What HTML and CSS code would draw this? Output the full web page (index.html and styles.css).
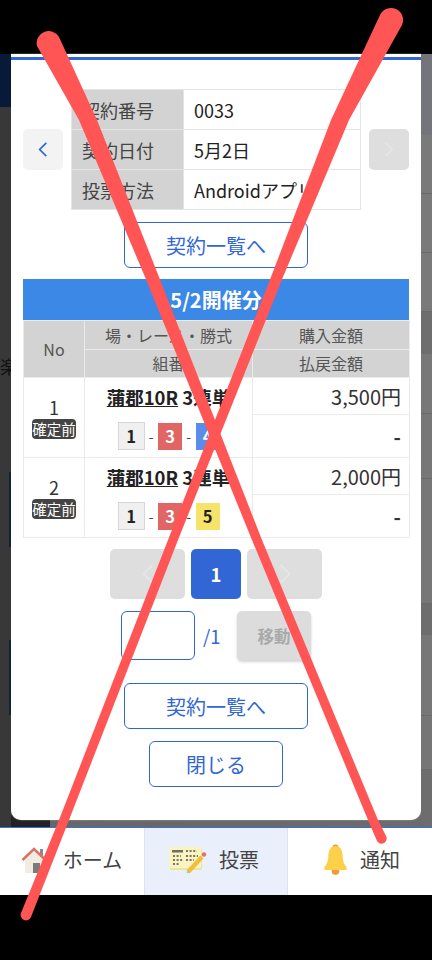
FILE: index.html
```html
<!DOCTYPE html>
<html lang="ja">
<head>
<meta charset="utf-8">
<title>契約詳細</title>
<link rel="stylesheet" href="styles.css">
</head>
<body>
<div class="screen">
  <div class="black-top"></div>
  <main class="main">
    <div class="strip-left">
      <div class="strip-navy"></div>
      <div class="strip-text">楽</div>
      <div class="strip-edge strip-edge-a"></div>
      <div class="strip-edge strip-edge-b"></div>
    </div>
    <section class="modal">
      <div class="modal-bar"></div>
      <div class="info-row">
        <button class="side-btn side-on" aria-label="前へ">
          <svg viewBox="0 0 12 20" class="chev"><path d="M10 2 L2 10 L10 18" class="chev-blue"/></svg>
        </button>
        <table class="info">
          <tr><th>契約番号</th><td>0033</td></tr>
          <tr><th>契約日付</th><td>5月2日</td></tr>
          <tr><th>投票方法</th><td>Androidアプリ</td></tr>
        </table>
        <button class="side-btn side-off" aria-label="次へ">
          <svg viewBox="0 0 12 20" class="chev"><path d="M2 2 L10 10 L2 18" class="chev-gray"/></svg>
        </button>
      </div>
      <div class="center-row list-top"><a class="outline wide">契約一覧へ</a></div>
      <div class="card-title">5/2開催分</div>
      <table class="bets">
        <tr class="hd">
          <th rowspan="2" class="c-no">No</th>
          <th class="c-race">場・レース・勝式</th>
          <th class="c-amt">購入金額</th>
        </tr>
        <tr class="hd">
          <th>組番</th>
          <th>払戻金額</th>
        </tr>
        <tr class="amt-a">
          <td rowspan="2" class="no"><div>1</div><span class="badge">確定前</span></td>
          <td rowspan="2" class="bet">
            <div class="bet-title"><u>蒲郡10R</u> 3連単</div>
            <div class="chips"><span class="chip c1">1</span><i>-</i><span class="chip c3">3</span><i>-</i><span class="chip c4">4</span></div>
          </td>
          <td class="amt">3,500円</td>
        </tr>
        <tr class="amt-b"><td class="amt dash">-</td></tr>
        <tr class="amt-a">
          <td rowspan="2" class="no"><div>2</div><span class="badge">確定前</span></td>
          <td rowspan="2" class="bet">
            <div class="bet-title"><u>蒲郡10R</u> 3連単</div>
            <div class="chips"><span class="chip c1">1</span><i>-</i><span class="chip c3">3</span><i>-</i><span class="chip c5">5</span></div>
          </td>
          <td class="amt">2,000円</td>
        </tr>
        <tr class="amt-b"><td class="amt dash">-</td></tr>
      </table>
      <div class="pager">
        <span class="pg pg-off"><svg viewBox="0 0 12 20" class="chev chev-lg"><path d="M10 2 L2 10 L10 18" class="chev-gray"/></svg></span>
        <span class="pg pg-on">1</span>
        <span class="pg pg-off"><svg viewBox="0 0 12 20" class="chev chev-lg"><path d="M2 2 L10 10 L2 18" class="chev-gray"/></svg></span>
      </div>
      <div class="jump">
        <input class="jump-input" type="text" aria-label="ページ">
        <span class="jump-total">/1</span>
        <span class="jump-btn">移動</span>
      </div>
      <div class="center-row list-bottom"><a class="outline wide">契約一覧へ</a></div>
      <div class="center-row close-row"><a class="outline narrow">閉じる</a></div>
    </section>
    <div class="strip-right">
      <div class="band b1"></div><div class="band b2"></div><div class="band b2"></div><div class="band b2"></div>
      <div class="band b3"></div><div class="band b4"></div><div class="band b5"></div><div class="band b6"></div>
      <div class="band b3b"></div><div class="band b7"></div><div class="band b8"></div><div class="band b9"></div>
    </div>
  </main>
  <nav class="nav">
    <a class="nav-item">
      <svg class="ico-home" viewBox="0 0 26 28">
        <rect x="19" y="3" width="3" height="8" fill="#8a8a8a"/>
        <path d="M4 13 L13 5 L22 13 V27 H4 Z" fill="#f1ece2"/>
        <rect x="12" y="17" width="7" height="10" fill="#7b7b7b"/>
        <path d="M1.500 14 L13 3 L24.500 14" fill="none" stroke="#da7566" stroke-width="2.6"/>
      </svg>
      <span>ホーム</span>
    </a>
    <a class="nav-item nav-active">
      <svg class="ico-ticket" viewBox="0 0 38 28">
        <rect x="1" y="3" width="32" height="21" rx="1" fill="#efe3a4"/>
        <rect x="0" y="1" width="32" height="21" rx="1" fill="#fbf3c0"/>
        <rect x="3" y="4" width="11" height="2.500" fill="#6f6f6a"/>
        <path d="M4 10h8M4 14h10M4 18h6M17 5h11M17 10h12M17 14h8" stroke="#77746a" stroke-width="2" stroke-dasharray="2 1.600" fill="none"/>
        <path d="M19 26 L33 11" stroke="#f0bd3c" stroke-width="4.500" fill="none"/>
        <path d="M17.500 27.500 L19 24 L21 26 Z" fill="#c9b98a"/>
        <circle cx="35" cy="8.500" r="2.200" fill="#e8705f"/>
      </svg>
      <span>投票</span>
    </a>
    <a class="nav-item">
      <svg class="ico-bell" viewBox="0 0 26 32">
        <circle cx="13" cy="3.500" r="3.200" fill="#ee9b3c"/>
        <circle cx="13" cy="28" r="4" fill="#ee9b3c"/>
        <path d="M13 2 C7 2 5.500 8 5.500 13 C5.500 19 3 22 1.500 24 Q1 27 3 27 H23 Q25 27 24.500 24 C23 22 20.500 19 20.500 13 C20.500 8 19 2 13 2 Z" fill="#fdd04b"/>
      </svg>
      <span>通知</span>
    </a>
  </nav>
  <div class="black-bottom"></div>
  <svg class="cross" viewBox="0 0 432 960" aria-hidden="true">
    <path d="M37 46 A12 12 0 0 1 59 37 L97 120 L159 277 L262 540 L378 820 L386 836 A5 5 0 0 1 377 841 L368 820 L252 540 L145 277 L79 120 Z"/>
    <path d="M380 15 A12 12 0 0 1 402 25 L349 120 L283 277 L178 540 L69 820 L31 917 A5 5 0 0 1 21 913 L59 820 L168 540 L271 277 L331 120 Z"/>
  </svg>
</div>
</body>
</html>
```
FILE: styles.css
```css
* { box-sizing: border-box; }
html, body { margin: 0; padding: 0; background: #000; }
body { font-family: "Noto Sans CJK JP", "Noto Sans", sans-serif; color: #222; }
.screen { position: relative; width: 432px; height: 960px; display: flex; flex-direction: column; overflow: hidden; }
.black-top { height: 54px; background: #000; }
.black-bottom { height: 65px; background: #000; }

.main { height: 773px; display: flex; background: linear-gradient(to right, #222 50px, #676767 50px, #6c6c6c); }
.strip-left { position: relative; width: 11px; background: #383838; overflow: hidden; }
.strip-navy { height: 53px; background: #071a38; }
.strip-text { margin-top: 247px; width: 11px; display: flex; justify-content: flex-end; font-size: 18px; line-height: 24px; color: #111; white-space: nowrap; direction: rtl; }
.strip-edge { position: absolute; right: 0; width: 2px; background: #14213a; }
.strip-edge-a { top: 418px; height: 75px; }
.strip-edge-b { top: 586px; height: 75px; }

.modal { width: 410px; height: 766px; background: #fff; border-radius: 0 0 10px 10px; box-shadow: 0 0 1.500px #bbb; }
.modal-bar { height: 3px; margin-top: 3px; background: #3266d5; }

.strip-right { width: 11px; display: flex; flex-direction: column; }
.band { border-bottom: 1px solid #6a6a6a; }
.b1 { height: 81px; background: #73757a; border: 0; }
.b2 { height: 59px; background: #7a7a7a; }
.b3 { height: 42px; background: #6e6e6e; border: 0; }
.b4 { height: 60px; background: #787878; }
.b5 { height: 65px; background: #777; }
.b6 { height: 125px; background: #777; }
.b3b { height: 31px; background: #6d6d6d; border: 0; }
.b7 { height: 81px; background: #777; }
.b8 { height: 54px; background: #767676; }
.b9 { height: 56px; background: #6d6d6d; border: 0; }

.info-row { display: flex; align-items: center; justify-content: space-between; margin-top: 29px; padding: 0 12px; }
.side-btn { width: 40px; height: 41px; border: 0; border-radius: 5px; padding: 0; display: flex; align-items: center; justify-content: center; }
.side-on { background: #f3f3f3; }
.side-off { background: #dedede; }
.chev { width: 10px; height: 17px; }
.chev-lg { width: 14px; height: 22px; }
.chev-blue, .chev-gray { fill: none; stroke-width: 1.600; }
.chev-blue { stroke: #3266d5; stroke-width: 2; }
.chev-gray { stroke: #e6e6e6; }

.info { width: 290px; height: 121px; table-layout: fixed; border-collapse: collapse; font-size: 18px; }
.info th, .info td { border: 1px solid #e4e4e4; padding: 0; height: 40px; font-weight: 400; }
.info th { width: 112px; padding-left: 10px; background: #d3d3d3; color: #444; text-align: left; }
.info td { padding-left: 10px; background: #fff; color: #222; text-align: left; white-space: nowrap; overflow: hidden; }

.center-row { display: flex; justify-content: center; }
.list-top { margin-top: 12px; }
.list-bottom { margin-top: 23px; }
.close-row { margin-top: 12px; }
.outline { display: flex; align-items: center; justify-content: center; height: 46px; border: 1.500px solid #3266d5; border-radius: 6px; color: #3266d5; font-size: 20px; background: #fff; }
.wide { width: 184px; }
.narrow { width: 134px; }

.card-title { margin: 11px 12px 0; height: 41px; display: flex; align-items: center; justify-content: center; background: #3b88e6; color: #fff; font-weight: 700; font-size: 20px; }
.bets { width: 386px; margin-left: 12px; table-layout: fixed; border-collapse: collapse; }
.bets th, .bets td { border: 1.500px solid #ebebeb; padding: 0; }
.bets th { background: #d3d3d3; color: #555; font-size: 16px; font-weight: 400; text-align: center; }
.hd { height: 28.500px; }
.c-no { width: 61px; }
.c-race { width: 168px; }
.c-amt { width: 157px; }
.amt-a { height: 37px; }
.amt-b { height: 43px; }
.no { text-align: center; font-size: 18px; line-height: 23px; color: #333; vertical-align: middle; }
.badge { display: block; width: 44px; margin: 0 auto; font-size: 14.500px; line-height: 20px; border-radius: 4px; background: #444; color: #fff; white-space: nowrap; }
.bet { text-align: center; vertical-align: top; }
.bet-title { margin-top: 6px; font-size: 18.500px; font-weight: 700; line-height: 26px; white-space: nowrap; color: #222; }
.chips { display: flex; align-items: center; justify-content: center; margin-top: 12px; height: 28px; }
.chips i { width: 13.500px; text-align: center; font-style: normal; font-size: 14px; color: #444; }
.chip { display: flex; align-items: center; justify-content: center; width: 24px; height: 27px; font-size: 16.500px; font-weight: 700; color: #222; }
.c1 { width: 27px; height: 28px; background: #f0f0f0; border: 1px solid #d6d6d6; }
.c3 { background: #e06666; color: #fff; }
.c4 { background: #5b8ce8; color: #fff; }
.c5 { background: #f7e36a; }
.amt { text-align: right; padding-right: 8px !important; font-size: 20px; color: #333; vertical-align: middle; }
.dash { font-weight: 700; font-size: 20px; }

.pager { display: flex; justify-content: center; gap: 6px; margin-top: 11px; }
.pg { display: flex; align-items: center; justify-content: center; height: 50px; border-radius: 5px; }
.pg-off { width: 75px; background: #dedede; }
.pg-on { width: 50px; background: #3266d5; color: #fff; font-weight: 700; font-size: 18.500px; }
.jump { display: flex; align-items: center; margin: 12px 0 0 110px; }
.jump-input { width: 74px; height: 49px; border: 1.500px solid #3266d5; border-radius: 6px; background: #fff; padding: 0; }
.jump-total { width: 42px; padding-left: 8px; color: #3266d5; font-size: 18.500px; }
.jump-btn { width: 74px; height: 49px; display: flex; align-items: center; justify-content: center; border-radius: 5px; background: #dcdcdc; color: #a9a9a9; font-weight: 700; font-size: 16.500px; box-shadow: 0 2px 3px rgba(0,0,0,.18); }

.nav { height: 68px; display: grid; grid-template-columns: 144px 144px 144px; background: #fff; border-top: 1.500px solid #3d6fd0; }
.nav-item { display: flex; align-items: center; justify-content: center; gap: 16px; padding-bottom: 4px; font-size: 20px; color: #444; }
.nav-item:first-child { padding-right: 1px; }
.nav-active { background: #eaf0fb; border-left: 1px solid #dfe3ea; border-right: 1px solid #dfe3ea; gap: 12px; }
.nav-active svg { margin-left: -4px; }
.ico-home { width: 26px; height: 28px; }
.ico-ticket { width: 38px; height: 28px; }
.ico-bell { width: 25px; height: 31px; }
.nav-item:last-child { gap: 12px; padding-left: 3px; }

.cross { position: absolute; left: 0; top: 0; width: 432px; height: 960px; pointer-events: none; }
.cross path { fill: #ff5555; }
```
